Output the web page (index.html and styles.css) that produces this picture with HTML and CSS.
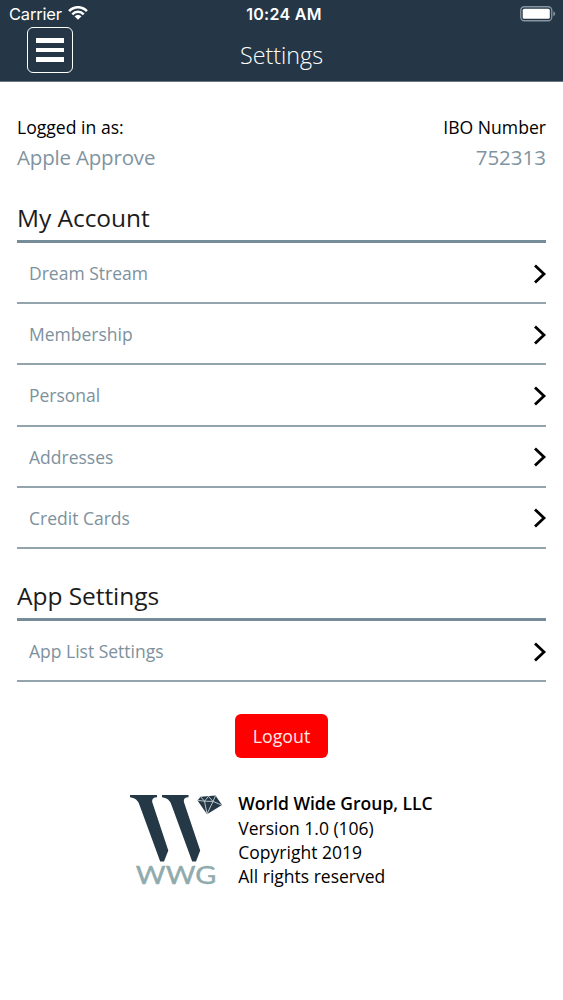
FILE: index.html
```html
<!DOCTYPE html>
<html lang="en">
<head>
<meta charset="utf-8">
<title>Settings</title>
<link rel="stylesheet" href="styles.css">
</head>
<body>
<header class="top">
  <div class="status">
    <div class="carrier"><span class="carrier-name">Carrier</span>
      <svg class="wifi" width="20" height="14" viewBox="0 0 20 14" fill="none" stroke="#fff" stroke-width="2.5"><path d="M1.1 5.1C6-.1 14-.1 18.900 5.100M4.300 8.300C7.500 5 12.500 5 15.700 8.300"/><path fill="#fff" stroke="none" d="M6.500 10.200Q10 7.200 13.500 10.200L10 13.700Z"/></svg>
    </div>
    <span class="clock">10:24 AM</span>
    <div class="power"><svg width="36" height="16" viewBox="0 0 36 16"><rect x=".75" y=".75" width="31" height="14" rx="3.500" fill="none" stroke="#88949f" stroke-width="1.300"/><rect x="2.700" y="2.700" width="27.100" height="10.100" rx="1.600" fill="#fff"/><path d="M33.300 5.300Q35.200 6 35.200 7.800T33.300 10.300Z" fill="#88949f"/></svg></div>
  </div>
  <div class="nav">
    <button class="menu" aria-label="Menu"><i></i><i></i><i></i></button>
    <h1 class="title">Settings</h1>
  </div>
</header>
<main class="content">
  <section class="user">
    <div><div class="label">Logged in as:</div><div class="value name">Apple Approve</div></div>
    <div class="right"><div class="label">IBO Number</div><div class="value">752313</div></div>
  </section>
  <h2 class="heading">My Account</h2>
  <ul class="list">
    <li class="row"><span>Dream Stream</span><svg class="chev" viewBox="0 0 14 20"><path d="M2 1.500L11 10L2 18.500"/></svg></li>
    <li class="row"><span>Membership</span><svg class="chev" viewBox="0 0 14 20"><path d="M2 1.500L11 10L2 18.500"/></svg></li>
    <li class="row"><span>Personal</span><svg class="chev" viewBox="0 0 14 20"><path d="M2 1.500L11 10L2 18.500"/></svg></li>
    <li class="row"><span>Addresses</span><svg class="chev" viewBox="0 0 14 20"><path d="M2 1.500L11 10L2 18.500"/></svg></li>
    <li class="row"><span>Credit Cards</span><svg class="chev" viewBox="0 0 14 20"><path d="M2 1.500L11 10L2 18.500"/></svg></li>
  </ul>
  <h2 class="heading second">App Settings</h2>
  <ul class="list">
    <li class="row"><span>App List Settings</span><svg class="chev" viewBox="0 0 14 20"><path d="M2 1.500L11 10L2 18.500"/></svg></li>
  </ul>
  <button class="logout">Logout</button>
  <footer class="about">
    <svg class="logo" width="96" height="96" viewBox="0 0 96 96">
      <g fill="#243846">
        <path d="M0 0H27V2.300Q21.500 2.400 22.200 7L38.300 55.500L34 66.500H30.200L9.500 10Q7.400 3 0 2.300Z"/>
        <path d="M32 0H58.500V2.300Q53 2.400 53.900 7L70.200 55.500L66 66.500H62.200L41.500 10Q39.400 3 32 2.300Z"/>
        <path d="M70.600 1.700L85.500 .5L92 10L77 19.300L67.500 5.500Z"/>
      </g>
      <path fill="none" stroke="#c9d2d6" stroke-width=".9" d="M68 5.400L74.500 6.200L83 6.400L91.500 10M70.600 1.700L74.500 6.200L78.500 1.300L83 6.400L85.500 .8M74.500 6.200L77 19L83 6.400"/>
      <text class="logo-text" x="5.800" y="89.300" textLength="80.500" lengthAdjust="spacingAndGlyphs">WWG</text>
    </svg>
    <div class="legal"><strong>World Wide Group, LLC</strong><span>Version 1.0 (106)</span><span>Copyright 2019</span><span>All rights reserved</span></div>
  </footer>
</main>
</body>
</html>
```
FILE: styles.css
```css
* { box-sizing: border-box; }
body { margin: 0; background: #fff; color: #000; font-family: "Open Sans", "Noto Sans", sans-serif; height: 1000px; overflow: hidden; }
h1, h2, ul { margin: 0; padding: 0; font-weight: 400; }
button { font: inherit; padding: 0; }
.top { height: 82px; background: #253746; border-bottom: 1px solid #66757f; color: #fff; }
.status { height: 27px; padding: 0 7px 0 9px; display: grid; grid-template-columns: 1fr auto 1fr; align-items: center; font-family: Inter, sans-serif; }
.carrier { display: flex; align-items: center; gap: 6px; }
.carrier-name { font-size: 16.5px; letter-spacing: -.2px; padding-top: 1px; }
.wifi { margin-top: -1px; }
.clock { font-size: 16px; font-weight: 600; letter-spacing: .3px; padding: 1px 0 0 3px; }
.power { display: flex; justify-content: flex-end; }
.nav { display: grid; grid-template-columns: 1fr auto 1fr; padding: 0 27px; }
.menu { width: 46px; height: 46px; border: 1.5px solid #fff; border-radius: 6px; background: none; display: flex; flex-direction: column; align-items: center; justify-content: center; gap: 5px; }
.menu i { width: 28px; height: 4.500px; background: #fff; }
.title { font-size: 23.300px; font-weight: 300; line-height: 33px; padding-top: 12px; }
.content { padding: 0 17px; }
.user { display: flex; justify-content: space-between; padding-top: 30px; }
.right { text-align: right; }
.label { font-size: 17.600px; line-height: 30px; }
.value { font-size: 20.500px; line-height: 30px; color: #8093a0; }
.name { letter-spacing: -.18px; }
.heading { font-size: 24.500px; line-height: 34px; margin-top: 29px; height: 42px; letter-spacing: -.05px; border-bottom: 3px solid #768c99; color: #1c1c1c; }
.second { margin-top: 30px; }
.list { list-style: none; }
.row { height: 61.200px; display: flex; align-items: center; justify-content: space-between; padding: 1px 0 0 12px; border-bottom: 2px solid #93a4ae; font-size: 17.500px; color: #7d919d; }
.chev { width: 14px; height: 20px; margin: 1px -1px 0 0; fill: none; stroke: #000; stroke-width: 2.800; }
.logout { display: block; width: 93px; height: 44px; margin: 32px auto 0; border: 0; border-radius: 6px; background: #f00; color: #ffe8e8; font-size: 17.800px; }
.about { display: flex; justify-content: center; gap: 12px; margin-top: 33px; }
.logo { margin-top: 4px; }
.logo-text { font-family: Lato, sans-serif; font-size: 24.500px; font-weight: 400; fill: #8fabac; stroke: #8fabac; stroke-width: .4; }
.legal { display: flex; flex-direction: column; font-size: 17.500px; line-height: 24.400px; }
.legal strong { font-weight: 600; }
```
